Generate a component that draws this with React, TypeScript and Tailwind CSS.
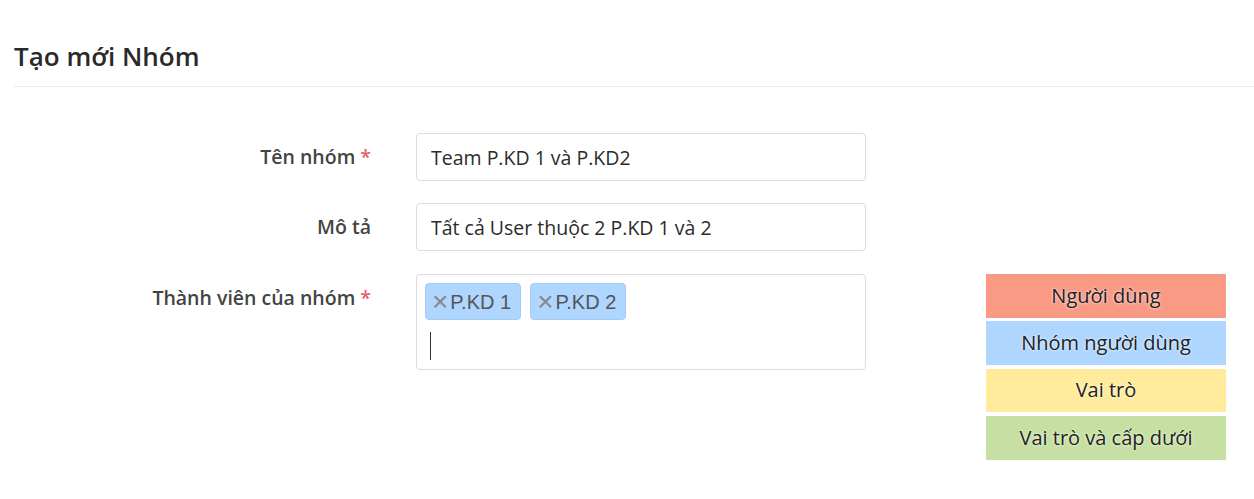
export default function App() {
  const tags = ["P.KD 1", "P.KD 2"];
  const options = [
    { label: "Người dùng", bg: "bg-[#f99a85]" },
    { label: "Nhóm người dùng", bg: "bg-[#aed6ff]" },
    { label: "Vai trò", bg: "bg-[#ffeb9b]" },
    { label: "Vai trò và cấp dưới", bg: "bg-[#c6dfa2]" },
  ];

  return (
    <div className="min-h-screen bg-white pl-[14px] font-['Open_Sans',sans-serif] text-[#333]">
      {/* header */}
      <div className="border-b border-[#e9ecef] pt-[38px] pb-[12px]">
        <h4 className="text-[26px] leading-[36px] font-semibold text-[#2a2a2a]">Tạo mới Nhóm</h4>
      </div>

      <form className="mt-[46px] flex flex-col">
        <div className="flex items-center">
          <label className="w-[357px] text-right text-[19.5px] font-semibold text-[#444]">
            Tên nhóm <span className="text-[#e4606d]">*</span>
          </label>
          <input
            className="ml-[45px] h-[48px] w-[450px] rounded-[4px] border border-[#dcdcdc] px-[14px] text-[19.5px] text-[#2b2b2b] outline-none"
            defaultValue="Team P.KD 1 và P.KD2"
          />
        </div>

        <div className="mt-[22px] flex items-center">
          <label className="w-[357px] text-right text-[19.5px] font-semibold text-[#444]">Mô tả</label>
          <input
            className="ml-[45px] h-[48px] w-[450px] rounded-[4px] border border-[#dcdcdc] px-[14px] text-[19.5px] text-[#2b2b2b] outline-none"
            defaultValue="Tất cả User thuộc 2 P.KD 1 và 2"
          />
        </div>

        <div className="mt-[23px] flex items-start">
          <label className="w-[357px] pt-[11px] text-right text-[19.5px] leading-[26px] font-semibold text-[#444]">
            Thành viên của nhóm <span className="text-[#e4606d]">*</span>
          </label>
          <div className="ml-[45px] h-[96px] w-[450px] rounded-[4px] border border-[#dcdcdc] px-[8px] pt-[8px]">
            <div className="flex gap-[9px]">
              {tags.map((t) => (
                <span
                  key={t}
                  className="flex h-[37px] items-center rounded-[4px] border border-[#a3cbf3] bg-[#aed6ff] pr-[9px] pl-[6px] font-['Liberation_Sans',Arial,sans-serif] text-[20px] text-[#555]"
                >
                  <span className="mr-[2px] text-[28px] leading-none text-[#888]">×</span>
                  {t}
                </span>
              ))}
            </div>
            <div className="mt-[12px] ml-[5px] h-[28px] w-px bg-[#333]" />
          </div>

          <div className="ml-[120px] flex w-[240px] flex-col gap-[3.6px]">
            {options.map((o) => (
              <button
                key={o.label}
                type="button"
                className={
                  o.bg +
                  " h-[43.7px] text-center text-[20px] text-[#222] [text-shadow:0_0_3px_#fff]"
                }
              >
                {o.label}
              </button>
            ))}
          </div>
        </div>
      </form>
    </div>
  );
}
